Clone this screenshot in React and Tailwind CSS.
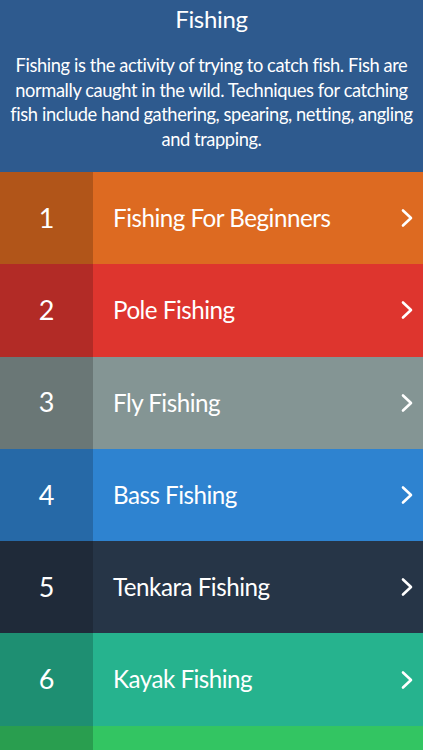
const items = [
  { n: 1, title: 'Fishing For Beginners', main: 'bg-[#dd6a21]', side: 'bg-[#b15519]' },
  { n: 2, title: 'Pole Fishing', main: 'bg-[#de352e]', side: 'bg-[#b22b26]' },
  { n: 3, title: 'Fly Fishing', main: 'bg-[#849594]', side: 'bg-[#6a7776]' },
  { n: 4, title: 'Bass Fishing', main: 'bg-[#2e83d0]', side: 'bg-[#2669a7]' },
  { n: 5, title: 'Tenkara Fishing', main: 'bg-[#263547]', side: 'bg-[#1f2a39]' },
  { n: 6, title: 'Kayak Fishing', main: 'bg-[#26b38e]', side: 'bg-[#1e8f72]' },
];

function Chevron() {
  return (
    <svg width="14" height="20" viewBox="0 0 14 20" fill="none" className="shrink-0">
      <path d="M3 2.5 L11 10 L3 17.5" stroke="white" strokeWidth="2.6" strokeLinecap="round" strokeLinejoin="round" />
    </svg>
  );
}

export default function App() {
  return (
    <div className="w-[423px] h-[750px] overflow-hidden font-['Lato',sans-serif] text-white">
      {/* Header */}
      <div className="h-[172px] bg-[#2e5a8e] flex flex-col items-center pt-[3px]">
        <h1 className="text-[24px] leading-[32px] tracking-[-0.3px]">Fishing</h1>
        <p className="mt-[18px] text-center text-[18.3px] leading-[24.7px] tracking-[-0.4px] whitespace-nowrap">
          Fishing is the activity of trying to catch fish. Fish are<br />
          normally caught in the wild. Techniques for catching<br />
          fish include hand gathering, spearing, netting, angling<br />
          and trapping.
        </p>
      </div>

      {/* List */}
      {items.map((it) => (
        <div key={it.n} className={`h-[92.3px] flex items-center ${it.main}`}>
          <div className={`w-[93px] h-full flex items-center justify-center text-[27px] ${it.side}`}>
            {it.n}
          </div>
          <div className="flex-1 pl-5 text-[24.2px] tracking-[-0.5px]">{it.title}</div>
          <div className="pr-[9px]">
            <Chevron />
          </div>
        </div>
      ))}

      {/* next row, scrolled below the fold */}
      <div className="h-[92.3px] flex bg-[#33c562]">
        <div className="w-[93px] h-full bg-[#299e4f]" />
      </div>
    </div>
  );
}
